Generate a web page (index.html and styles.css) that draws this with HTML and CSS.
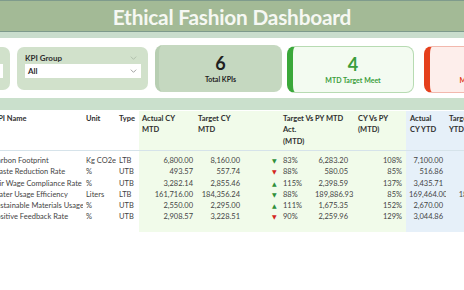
FILE: index.html
```html
<!DOCTYPE html>
<html lang="en">
<head>
    <meta charset="UTF-8">
    <meta name="viewport" content="width=device-width, initial-scale=1.0">
    <title>Ethical Fashion Dashboard</title>
    <link rel="stylesheet" href="styles.css">
</head>
<body>
    <header class="topbar">
        <h1>Ethical Fashion Dashboard</h1>
    </header>
    <div class="topbar-shade"></div>

    <div class="cards">
        <div class="filter-card">
            <div class="filter-label">
                <span>Month</span>
                <svg class="chev faint" viewBox="0 0 10 6"><polyline points="1,1 5,5 9,1"/></svg>
            </div>
            <div class="dropdown">
                <span>All</span>
                <svg class="chev" viewBox="0 0 10 6"><polyline points="1,1 5,5 9,1"/></svg>
            </div>
        </div>
        <div class="filter-card">
            <div class="filter-label">
                <span>KPI Group</span>
                <svg class="chev faint" viewBox="0 0 10 6"><polyline points="1,1 5,5 9,1"/></svg>
            </div>
            <div class="dropdown">
                <span>All</span>
                <svg class="chev" viewBox="0 0 10 6"><polyline points="1,1 5,5 9,1"/></svg>
            </div>
        </div>
        <div class="kpi-card total">
            <div class="kpi-value">6</div>
            <div class="kpi-label">Total KPIs</div>
        </div>
        <div class="kpi-card meet">
            <div class="kpi-value">4</div>
            <div class="kpi-label">MTD Target Meet</div>
        </div>
        <div class="kpi-card missed">
            <div class="kpi-value">2</div>
            <div class="kpi-label">MTD Target Missed</div>
        </div>
    </div>

    <div class="band"></div>

    <div class="table-wrap">
        <table class="kpi-table">
            <colgroup>
                <col class="c-name"><col class="c-unit"><col class="c-type">
                <col class="c-act"><col class="c-tgt"><col class="c-tva">
                <col class="c-py"><col class="c-cvp"><col class="c-ytd"><col class="c-tytd">
            </colgroup>
            <thead>
                <tr>
                    <th>KPI Name</th>
                    <th>Unit</th>
                    <th>Type</th>
                    <th class="g act">Actual CY<br>MTD</th>
                    <th class="g tgt">Target CY<br>MTD</th>
                    <th class="g tva">Target Vs<br>Act.<br>(MTD)</th>
                    <th class="g">PY MTD</th>
                    <th class="g">CY Vs PY<br>(MTD)</th>
                    <th class="b ytd">Actual<br>CY YTD</th>
                    <th class="b">Target<br>YTD</th>
                </tr>
            </thead>
            <tbody>
                <tr class="first-row">
                    <td>Carbon Footprint</td><td>Kg CO2e</td><td>LTB</td>
                    <td class="g num">6,800.00</td><td class="g num tgt">8,160.00</td>
                    <td class="g tva"><span class="arrow good">&#9660;</span>83%</td>
                    <td class="g num py">6,283.20</td><td class="g num cvp">108%</td>
                    <td class="b num">7,100.00</td><td class="b num">7,810.00</td>
                </tr>
                <tr>
                    <td>Waste Reduction Rate</td><td>%</td><td>UTB</td>
                    <td class="g num">493.57</td><td class="g num tgt">557.74</td>
                    <td class="g tva"><span class="arrow bad">&#9660;</span>88%</td>
                    <td class="g num py">580.05</td><td class="g num cvp">85%</td>
                    <td class="b num">516.86</td><td class="b num">568.55</td>
                </tr>
                <tr>
                    <td>Fair Wage Compliance Rate</td><td>%</td><td>UTB</td>
                    <td class="g num">3,282.14</td><td class="g num tgt">2,855.46</td>
                    <td class="g tva"><span class="arrow good">&#9650;</span>115%</td>
                    <td class="g num py">2,398.59</td><td class="g num cvp">137%</td>
                    <td class="b num">3,435.71</td><td class="b num">3,779.28</td>
                </tr>
                <tr>
                    <td>Water Usage Efficiency</td><td>Liters</td><td>LTB</td>
                    <td class="g num">161,716.00</td><td class="g num tgt">184,356.24</td>
                    <td class="g tva"><span class="arrow good">&#9660;</span>88%</td>
                    <td class="g num py">189,886.93</td><td class="g num cvp">85%</td>
                    <td class="b num">169,464.00</td><td class="b num">186,410.40</td>
                </tr>
                <tr>
                    <td>Sustainable Materials Usage</td><td>%</td><td>UTB</td>
                    <td class="g num">2,550.00</td><td class="g num tgt">2,295.00</td>
                    <td class="g tva"><span class="arrow good">&#9650;</span>111%</td>
                    <td class="g num py">1,675.35</td><td class="g num cvp">152%</td>
                    <td class="b num">2,670.00</td><td class="b num">2,937.00</td>
                </tr>
                <tr>
                    <td>Positive Feedback Rate</td><td>%</td><td>UTB</td>
                    <td class="g num">2,908.57</td><td class="g num tgt">3,228.51</td>
                    <td class="g tva"><span class="arrow bad">&#9660;</span>90%</td>
                    <td class="g num py">2,259.96</td><td class="g num cvp">129%</td>
                    <td class="b num">3,044.86</td><td class="b num">3,349.35</td>
                </tr>
                <tr class="pad-row">
                    <td></td><td></td><td></td>
                    <td class="g"></td><td class="g"></td><td class="g"></td>
                    <td class="g"></td><td class="g"></td>
                    <td class="b"></td><td class="b"></td>
                </tr>
            </tbody>
        </table>
    </div>
</body>
</html>
```

FILE: styles.css
```css
html, body {
    margin: 0;
    background: #ffffff;
    font-family: 'Lato', sans-serif;
    color: #3c3c3c;
}
body {
    width: 464px;
    height: 290px;
    overflow: hidden;
}
.topbar {
    height: 30px;
    background: #a3ba96;
    border-top: 1px solid #7f9b8c;
    border-bottom: 1px solid #7d9a8c;
    display: flex;
    justify-content: center;
    align-items: center;
}
.topbar h1 {
    margin: 0;
    font-family: 'Lato', sans-serif;
    font-weight: 700;
    font-size: 20.8px;
    color: #f6f8f3;
    letter-spacing: -0.2px;
}
.topbar-shade {
    height: 6px;
    background: #c9ddcd;
}
.cards {
    display: flex;
    align-items: flex-start;
    margin-left: -121px;
    margin-top: 7px;
    height: 53px;
}
.cards > div {
    flex-shrink: 0;
}
.filter-card {
    width: 116px;
    height: 43px;
    margin-top: 2px;
    padding: 0 7px 0 8px;
    background: #d1e1cb;
    border-radius: 7px;
    margin-right: 7px;
}
.filter-label {
    display: flex;
    justify-content: space-between;
    align-items: center;
    height: 11px;
    margin-top: 5px;
    font-size: 8px;
    font-weight: 700;
    color: #2e2e2e;
}
.dropdown {
    display: flex;
    justify-content: space-between;
    align-items: center;
    height: 14px;
    margin-top: 1px;
    padding: 0 4px 0 3px;
    background: #ffffff;
    font-size: 8px;
    font-weight: 700;
    color: #2e2e2e;
}
.chev {
    width: 7px;
    height: 4px;
    fill: none;
    stroke: #8a8a8a;
    stroke-width: 1.2;
}
.chev.faint {
    stroke: #a9b8a4;
    margin-right: 4px;
}
.kpi-card {
    height: 47px;
    border-radius: 8px;
    display: flex;
    flex-direction: column;
    align-items: center;
    justify-content: center;
    box-sizing: border-box;
    font-weight: 700;
}
.kpi-value {
    font-size: 18px;
    line-height: 20px;
}
.kpi-label {
    font-size: 7px;
    line-height: 10px;
    margin-top: 1px;
}
.total {
    width: 127px;
    background: #c5d8c0;
    border-left: 4px solid #b7ceb2;
    color: #1f1f1f;
    margin-right: 5px;
}
.meet {
    width: 127px;
    margin-top: 1px;
    background: #f3fbf1;
    border: 1px solid #b7dbb2;
    border-left: 6px solid #3aa83a;
    color: #3b9e3b;
    margin-right: 10px;
}
.missed {
    width: 127px;
    margin-top: 1px;
    background: #fdeeeb;
    border: 1px solid #f2b8ad;
    border-left: 6px solid #e53f1c;
    color: #e0391a;
}
.band {
    height: 12px;
    background: #cae0cc;
}
.table-wrap {
    margin-top: 1px;
    margin-left: -10px;
}
.kpi-table {
    border-collapse: collapse;
    table-layout: fixed;
    width: 510px;
    font-size: 7.5px;
}
.c-name { width: 93px; }
.c-unit { width: 33px; }
.c-type { width: 23px; }
.c-act { width: 57px; }
.c-tgt { width: 47px; }
.c-tva { width: 69px; }
.c-py { width: 43px; }
.c-cvp { width: 51px; }
.c-ytd { width: 40px; }
.c-tytd { width: 54px; }
.kpi-table th {
    text-align: left;
    vertical-align: top;
    font-size: 7.5px;
    font-weight: 700;
    line-height: 11.3px;
    color: #2f2f2f;
    padding: 2px 0 3px 3px;
    height: 34px;
    white-space: nowrap;
    border-bottom: 1px solid #d6e3ea;
}
.kpi-table td {
    padding: 0 3px;
    height: 11.3px;
    line-height: 11.3px;
    white-space: nowrap;
    overflow: hidden;
    color: #444444;
}
.kpi-table td:first-child {
    padding-left: 2px;
}
.kpi-table .first-row td {
    padding-top: 4px;
}
.kpi-table .pad-row td {
    height: 9px;
}
.g { background: #f1fbea; }
.b { background: #e6f0f9; }
.num { text-align: right; }
.kpi-table th.act { padding-left: 3px; }
.kpi-table th.tgt { padding-left: 2px; }
.kpi-table th.tva { padding-left: 40px; }
.kpi-table th.ytd { padding-left: 4px; }
.kpi-table td.tva { padding-left: 29px; }
.kpi-table td.py { padding-right: 7px; }
.kpi-table td.cvp { padding-right: 4px; }
.arrow {
    display: inline-block;
    width: 11px;
    font-size: 6px;
    font-family: 'DejaVu Sans', sans-serif;
}
.good { color: #2f8f3a; }
.bad { color: #d3261e; }
```
